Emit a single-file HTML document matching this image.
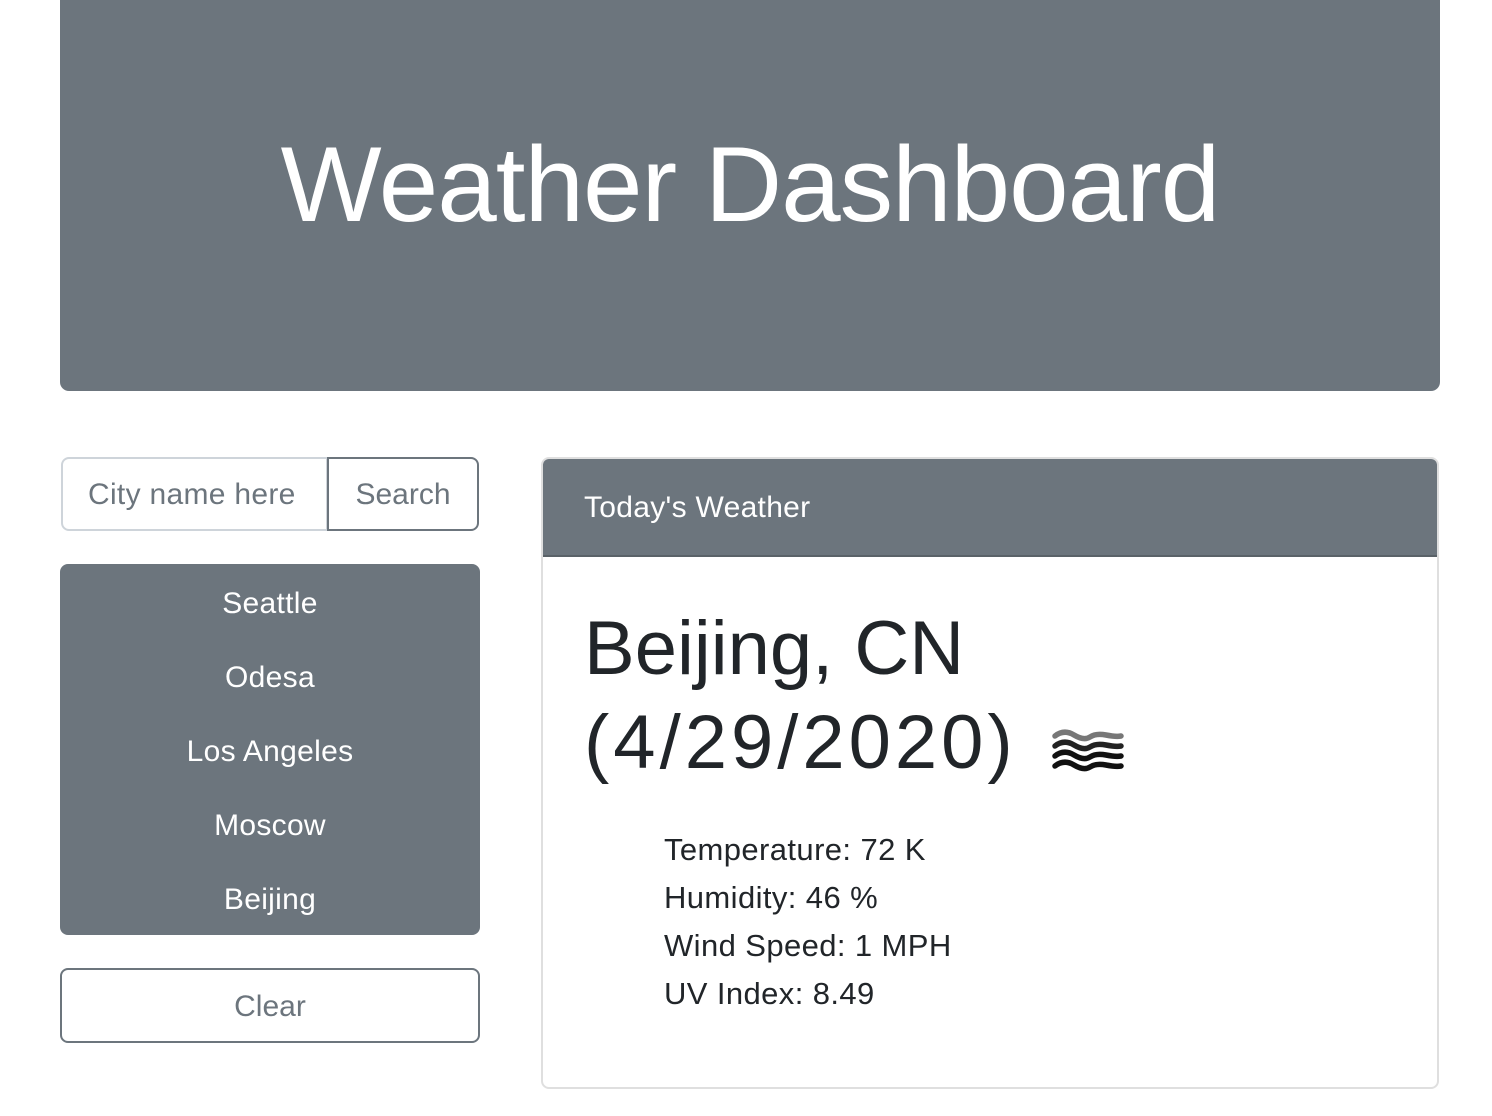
<!DOCTYPE html>
<html><head><meta charset="utf-8"><style>
*{box-sizing:border-box;margin:0;padding:0}
body{width:1492px;height:1116px;background:#fff;font-family:"Liberation Sans",Arial,sans-serif;color:#212529;position:relative;overflow:hidden}
.hdr{position:absolute;left:60px;top:0;width:1380px;height:391px;background:#6c757d;border-radius:0 0 9px 9px;color:#fff;text-align:center;font-size:107px;line-height:1;padding-top:131px;letter-spacing:-1px}
.inp{position:absolute;left:61px;top:457px;width:267px;height:74px;border:2px solid #ced4da;border-radius:8px 0 0 8px;font-size:30px;color:#6c757d;padding:19px 0 0 25px;white-space:nowrap;overflow:hidden;letter-spacing:0.3px}
.btn{position:absolute;left:327px;top:457px;width:152px;height:74px;border:2px solid #6c757d;border-radius:0 8px 8px 0;font-size:30px;color:#6c757d;text-align:center;padding-top:19px}
.list{position:absolute;left:60px;top:564px;width:420px;height:371px;background:#6c757d;border-radius:8px;color:#fff;font-size:30px;text-align:center;padding-top:23px;letter-spacing:0.3px}
.list div{height:74px}
.clear{position:absolute;left:60px;top:968px;width:420px;height:75px;border:2px solid #6c757d;border-radius:8px;color:#6c757d;font-size:30px;text-align:center;padding-top:20px}
.card{position:absolute;left:541px;top:457px;width:898px;height:632px;border:2px solid #dfdfdf;border-radius:8px;overflow:hidden}
.ch{height:98px;background:#6c757d;color:#fff;font-size:30px;padding:32px 0 0 41px;border-bottom:2px solid #5a6268;letter-spacing:0.3px}
.title{position:absolute;left:41px;top:143px;font-size:76px;line-height:94px;color:#212529}
.title span{letter-spacing:4px}
.det{position:absolute;left:121px;top:367px;font-size:31px;line-height:48px;letter-spacing:0.4px}
svg{position:absolute;left:1050px;top:726px}
</style></head><body>
<div class="hdr">Weather Dashboard</div>
<div class="inp">City name here</div>
<div class="btn">Search</div>
<div class="list"><div>Seattle</div><div>Odesa</div><div>Los Angeles</div><div>Moscow</div><div>Beijing</div></div>
<div class="clear">Clear</div>
<div class="card"><div class="ch">Today's Weather</div>
<div class="title">Beijing, CN<br><span>(4/29/2020)</span></div>
<div class="det">Temperature: 72 K<br>Humidity: 46 %<br>Wind Speed: 1 MPH<br>UV Index: 8.49</div>
</div>
<svg width="76" height="50" viewBox="0 0 76 50" fill="none" stroke-width="5.5" stroke-linecap="round">
<path d="M5 10 Q14 3 24 9 T40 11 T56 9 T71 10" stroke="#777"/>
<path d="M5 20 Q14 13 24 19 T40 21 T56 19 T71 20" stroke="#222"/>
<path d="M5 30 Q14 23 24 29 T40 31 T56 29 T71 30" stroke="#111"/>
<path d="M5 40 Q14 33 24 39 T40 41 T56 39 T71 40" stroke="#111"/>
</svg>
</body></html>
